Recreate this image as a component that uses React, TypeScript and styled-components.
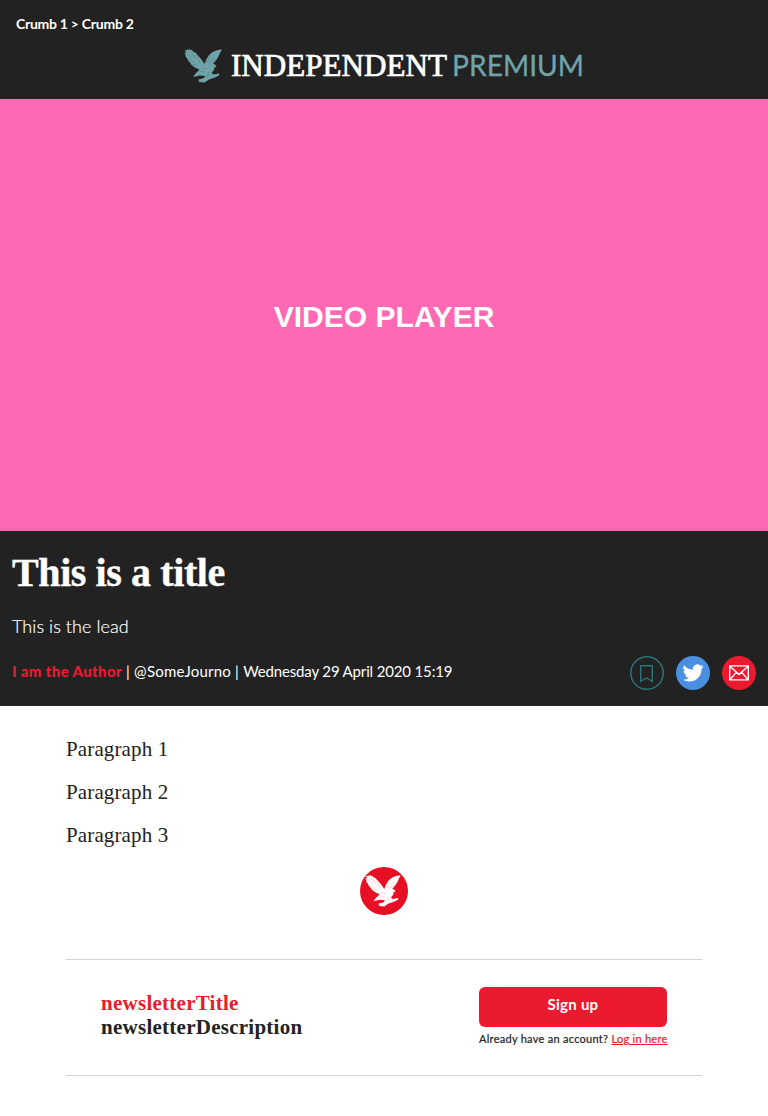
import React from 'react';
import styled, { createGlobalStyle } from 'styled-components';

const sans = `Lato, "Open Sans", sans-serif`;
const serif = `"Liberation Serif", "Times New Roman", serif`;

const GlobalStyle = createGlobalStyle`
  *, *::before, *::after { box-sizing: border-box; }
  body { margin: 0; background: #fff; color: #222; font-family: ${sans}; }
  h1, h2, p { margin: 0; }
`;

const Header = styled.header`
  height: 99px;
  background: #222;
  color: #fff;
`;

const Breadcrumb = styled.nav`
  padding: 15px 16px 0;
  height: 48px;
  font-size: 14px;
  font-weight: 700;
  line-height: 17px;
  letter-spacing: -0.26px;
`;

const Logo = styled.svg`
  display: block;
  width: 400px;
  height: 36px;
  margin: 0 auto;
`;

const Video = styled.section`
  display: flex;
  align-items: center;
  justify-content: center;
  height: 432px;
  padding-top: 4px;
  background: #ff69b4;
  color: #fff;
  font: 700 30px/36px "Liberation Sans", Arial, sans-serif;
`;

const Intro = styled.section`
  height: 175px;
  padding: 20px 12px 0;
  background: #222;
  color: #fff;
`;

const Title = styled.h1`
  font: 700 40px/44px ${serif};
  letter-spacing: -0.4px;
  -webkit-text-stroke: 0.4px currentColor;
`;

const Lead = styled.p`
  margin-top: 19px;
  font-size: 18px;
  font-weight: 300;
  line-height: 24px;
  letter-spacing: 0.07px;
  -webkit-text-stroke: 0.2px currentColor;
`;

const MetaRow = styled.div`
  display: flex;
  align-items: center;
  justify-content: space-between;
  height: 34px;
  margin-top: 18px;
`;

const Meta = styled.p`
  font-size: 15px;
  line-height: 20px;
  padding-bottom: 4px;
  white-space: pre;
`;

const Author = styled.span`
  color: #ec1a2e;
  font-weight: 900;
  letter-spacing: 0.36px;
`;

const Handle = styled.span`
  letter-spacing: 0.22px;
`;

const PublishedAt = styled.time`
  letter-spacing: -0.15px;
`;

const Actions = styled.div`
  display: flex;
  gap: 12px;
`;

const Action = styled.button<{ $fill: string; $ring?: string }>`
  width: 34px;
  height: 34px;
  padding: 0;
  border: 0;
  border-radius: 50%;
  background: ${p => p.$fill};
  box-shadow: ${p => (p.$ring ? `inset 0 0 0 1.5px ${p.$ring}` : 'none')};
  svg { display: block; width: 34px; height: 34px; }
`;

const Article = styled.main`
  padding: 31px 66px 0;
`;

const Paragraph = styled.p`
  margin-bottom: 19px;
  font: 400 21px/24px ${serif};
  letter-spacing: 0.13px;
`;

const Badge = styled.svg`
  display: block;
  width: 48px;
  height: 48px;
  margin: 20px auto 0;
`;

const Newsletter = styled.section`
  display: flex;
  justify-content: space-between;
  height: 117px;
  margin-top: 44px;
  padding: 27px 35px 0;
  border: solid #d4d4d4;
  border-width: 1px 0;
`;

const NewsletterText = styled.div`
  padding-top: 4px;
  font: 700 21px/24px ${serif};
  letter-spacing: 0.26px;
`;

const NewsletterTitle = styled.h2`
  color: #ec1a2e;
  font: inherit;
`;

const SignUp = styled.div`
  width: 188px;
`;

const SignUpButton = styled.button`
  display: block;
  width: 100%;
  height: 40px;
  padding: 0 0 6px;
  border: 0;
  border-radius: 6px;
  background: #ec1a2e;
  color: #fff;
  font: 700 15px/20px ${sans};
  letter-spacing: 0.25px;
`;

const Account = styled.p`
  margin-top: 4px;
  font-size: 11px;
  line-height: 15px;
  letter-spacing: 0.28px;
  white-space: nowrap;
  -webkit-text-stroke: 0.2px currentColor;
`;

const LoginLink = styled.a`
  color: #ec1a2e;
  text-decoration: underline;
`;

function Eagle({ color, shade }: { color: string; shade: string }) {
  return (
    <g>
      <path
        fill={color}
        d="M5.5.5 6.5 2 8 2 9 3.5 11 4.2 14 7.5 17 11 20.5 16 22 12 25 7 29 3.7 33 2.2 38 1.2 36.5 4 35.5 6 34.5 8.5 33 11 31 13.5 29 15.5 31.5 17 32.5 19.5 30.5 19 30 22 27.5 25 29.5 26.5 35 25.5 35.5 27 31 29.5 25 31.5 20.5 34.5 15 34 14.5 31.5 20 30 21 28 16 27.5 9 29 11.5 25.5 15.5 21.5 11 19.5 7 16.5 6 14.5 4 12.5 3 10 1.5 8.5 1.5 6.5.3 4.5 2.5 4.5.5 2 3 2.5 2.8.8 4.5 2.5Z"
      />
      <path
        fill="none"
        stroke={shade}
        strokeWidth=".35"
        opacity=".5"
        d="m2 5 6 5m-3 2 6 2m-4 2 7 1M5 2l5 7m-2-5 4 7m0-4 4 8m6 0 5-8m-3 8 7-7m-6 8 7-5m-15 9 6 1m-9 2 7 1m2 2 4-2m-12 7 11-4"
      />
    </g>
  );
}

export default function App() {
  return (
    <>
      <GlobalStyle />
      <Header>
        <Breadcrumb>Crumb 1 &gt; Crumb 2</Breadcrumb>
        <Logo viewBox="0 0 400 36" aria-label="Independent Premium">
          <Eagle color="#6fa5aa" shade="#222" />
          <text x="47" y="27.5" fill="#fff" stroke="#fff" strokeWidth=".7" fontFamily="Liberation Serif, serif" fontSize="30.5" textLength="216" lengthAdjust="spacingAndGlyphs">INDEPENDENT</text>
          <text x="268" y="27.5" fill="#6fa5aa" stroke="#6fa5aa" strokeWidth=".3" fontFamily="Lato, sans-serif" fontSize="28.3" textLength="132" lengthAdjust="spacingAndGlyphs">PREMIUM</text>
        </Logo>
      </Header>
      <Video>VIDEO PLAYER</Video>
      <Intro>
        <Title>This is a title</Title>
        <Lead>This is the lead</Lead>
        <MetaRow>
          <Meta>
            <Author>I am the Author</Author>
            <Handle> | @SomeJourno | </Handle>
            <PublishedAt>Wednesday 29 April 2020 15:19</PublishedAt>
          </Meta>
          <Actions>
            <Action $fill="transparent" $ring="#2b7377" aria-label="Save">
              <svg viewBox="0 0 34 34" fill="none" stroke="#2b7377" strokeWidth="1.4">
                <path d="M10.7 9.7h11.6v15.6L16.5 22l-5.8 3.3Z" />
              </svg>
            </Action>
            <Action $fill="#4990e2" aria-label="Twitter">
              <svg viewBox="0 0 34 34" fill="#fff">
                <path transform="translate(6.6 6.4) scale(.88)" d="M23.95 4.57a10 10 0 0 1-2.82.77 4.96 4.96 0 0 0 2.16-2.72c-.95.56-2 .96-3.13 1.18a4.92 4.92 0 0 0-8.38 4.49C7.69 8.1 4.07 6.13 1.64 3.16a4.92 4.92 0 0 0 1.52 6.57 4.9 4.9 0 0 1-2.23-.61v.06a4.92 4.92 0 0 0 3.95 4.83 5 5 0 0 1-2.21.08 4.94 4.94 0 0 0 4.6 3.42A9.87 9.87 0 0 1 0 19.54a13.99 13.99 0 0 0 7.56 2.21c9.05 0 14-7.5 14-13.98 0-.21 0-.42-.02-.63a9.94 9.94 0 0 0 2.46-2.55Z" />
              </svg>
            </Action>
            <Action $fill="#ec1a2e" aria-label="Email">
              <svg viewBox="0 0 34 34" fill="none" stroke="#fff" strokeWidth="1.4">
                <path d="M7.7 9.9h18.6v14H7.7ZM7.7 9.9l9.3 8.6 9.3-8.6M7.7 23.9l6.7-7.6m11.9 7.6-6.7-7.6" />
              </svg>
            </Action>
          </Actions>
        </MetaRow>
      </Intro>
      <Article>
        <Paragraph>Paragraph 1</Paragraph>
        <Paragraph>Paragraph 2</Paragraph>
        <Paragraph>Paragraph 3</Paragraph>
        <Badge viewBox="0 0 48 48">
          <circle cx="24" cy="24" r="24" fill="#e60f23" />
          <g transform="translate(5 7) scale(.94)">
            <Eagle color="#fff" shade="#e60f23" />
          </g>
        </Badge>
        <Newsletter>
          <NewsletterText>
            <NewsletterTitle>newsletterTitle</NewsletterTitle>
            <p>newsletterDescription</p>
          </NewsletterText>
          <SignUp>
            <SignUpButton>Sign up</SignUpButton>
            <Account>
              Already have an account? <LoginLink>Log in here</LoginLink>
            </Account>
          </SignUp>
        </Newsletter>
      </Article>
    </>
  );
}
